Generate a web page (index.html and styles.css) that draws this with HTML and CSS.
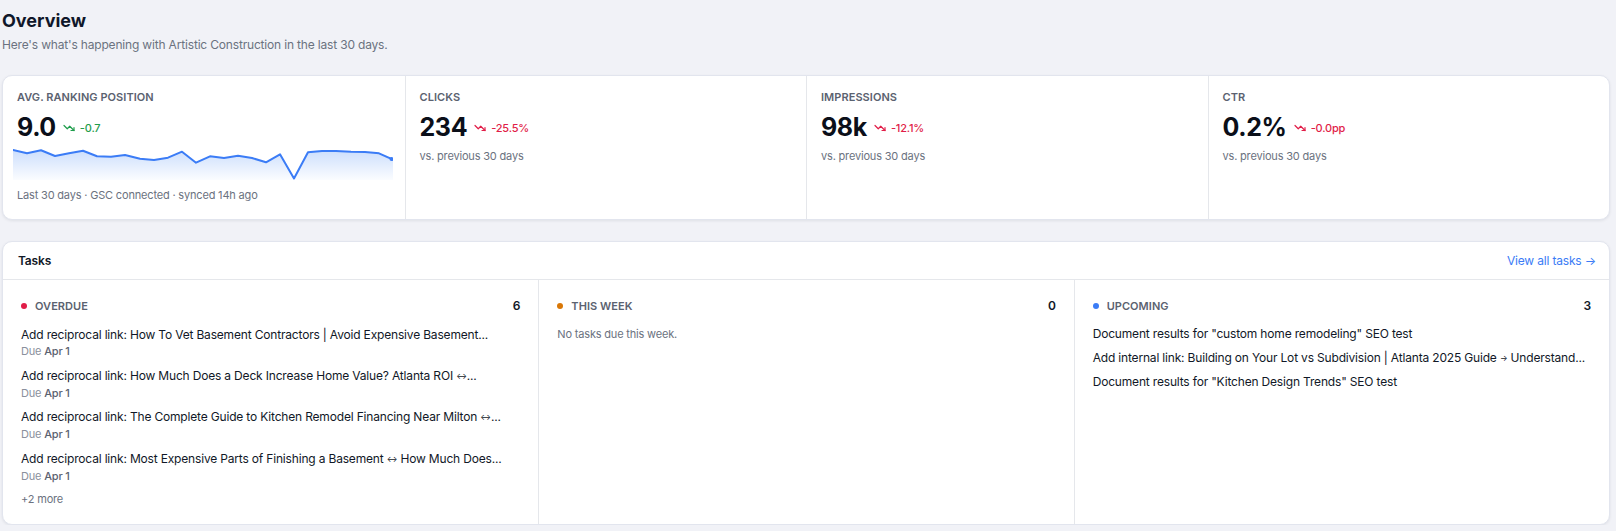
FILE: index.html
```html
<!DOCTYPE html>
<html lang="en">
<head>
<meta charset="utf-8">
<title>Overview</title>
<link rel="stylesheet" href="styles.css">
</head>
<body>
<main class="page">
  <header class="page-head">
    <h1 class="page-title">Overview</h1>
    <p class="page-sub">Here's what's happening with Artistic Construction in the last 30 days.</p>
  </header>

  <section class="card stats">
    <div class="stat">
      <div class="stat-label">Avg. Ranking Position</div>
      <div class="stat-row">
        <span class="stat-value">9.0</span>
        <span class="delta good">
          <svg class="trend" viewBox="0 0 24 24"><polyline points="22 17 13.5 8.5 8.5 13.5 2 7"/><polyline points="16 17 22 17 22 11"/></svg>
          -0.7
        </span>
      </div>
      <svg class="spark" viewBox="0 0 380 37" preserveAspectRatio="none">
        <defs>
          <linearGradient id="sg" x1="0" y1="0" x2="0" y2="1">
            <stop offset="0" stop-color="#3b82f6" stop-opacity="0.26"/>
            <stop offset="1" stop-color="#3b82f6" stop-opacity="0.02"/>
          </linearGradient>
        </defs>
        <path class="spark-area" d="M0,7 L14,10.3 L28,7.3 L42,13 L56,10.3 L70,7.7 L84,13.3 L98,13.7 L112,12 L127,15.7 L141,17 L155,14.7 L169,8.7 L183,19.7 L197,13.3 L211,15 L225,12.7 L239,15 L253,19.3 L267,11.3 L281,35.5 L295,9.3 L309,8 L323,8 L338,8.7 L352,9 L366,10.3 L380,16.5 L380,37 L0,37 Z"/>
        <polyline class="spark-line" points="0,7 14,10.3 28,7.3 42,13 56,10.3 70,7.7 84,13.3 98,13.7 112,12 127,15.7 141,17 155,14.7 169,8.7 183,19.7 197,13.3 211,15 225,12.7 239,15 253,19.3 267,11.3 281,35.5 295,9.3 309,8 323,8 338,8.7 352,9 366,10.3 380,16.5"/>
        <circle class="spark-dot" cx="378.5" cy="16" r="2"/>
      </svg>
      <div class="stat-foot">Last 30 days · GSC connected · synced 14h ago</div>
    </div>
    <div class="stat">
      <div class="stat-label">Clicks</div>
      <div class="stat-row">
        <span class="stat-value">234</span>
        <span class="delta bad">
          <svg class="trend" viewBox="0 0 24 24"><polyline points="22 17 13.5 8.5 8.5 13.5 2 7"/><polyline points="16 17 22 17 22 11"/></svg>
          -25.5%
        </span>
      </div>
      <div class="stat-note">vs. previous 30 days</div>
    </div>
    <div class="stat">
      <div class="stat-label">Impressions</div>
      <div class="stat-row">
        <span class="stat-value">98k</span>
        <span class="delta bad">
          <svg class="trend" viewBox="0 0 24 24"><polyline points="22 17 13.5 8.5 8.5 13.5 2 7"/><polyline points="16 17 22 17 22 11"/></svg>
          -12.1%
        </span>
      </div>
      <div class="stat-note">vs. previous 30 days</div>
    </div>
    <div class="stat">
      <div class="stat-label">CTR</div>
      <div class="stat-row">
        <span class="stat-value">0.2%</span>
        <span class="delta bad">
          <svg class="trend" viewBox="0 0 24 24"><polyline points="22 17 13.5 8.5 8.5 13.5 2 7"/><polyline points="16 17 22 17 22 11"/></svg>
          -0.0pp
        </span>
      </div>
      <div class="stat-note">vs. previous 30 days</div>
    </div>
  </section>

  <section class="card tasks">
    <div class="tasks-head">
      <h2 class="tasks-title">Tasks</h2>
      <a class="tasks-link" href="#">View all tasks <span class="link-arr">→</span></a>
    </div>
    <div class="tasks-cols">
      <div class="tcol">
        <div class="tcol-head">
          <span class="dot dot-red"></span>
          <span class="tcol-label">Overdue</span>
          <span class="tcol-count">6</span>
        </div>
        <ul class="tlist">
          <li class="titem">
            <div class="titem-title">Add reciprocal link: How To Vet Basement Contractors | Avoid Expensive Basement...</div>
            <div class="titem-due">Due <b>Apr 1</b></div>
          </li>
          <li class="titem">
            <div class="titem-title">Add reciprocal link: How Much Does a Deck Increase Home Value? Atlanta ROI <span class="arr">↔</span>...</div>
            <div class="titem-due">Due <b>Apr 1</b></div>
          </li>
          <li class="titem">
            <div class="titem-title">Add reciprocal link: The Complete Guide to Kitchen Remodel Financing Near Milton <span class="arr">↔</span>...</div>
            <div class="titem-due">Due <b>Apr 1</b></div>
          </li>
          <li class="titem">
            <div class="titem-title">Add reciprocal link: Most Expensive Parts of Finishing a Basement <span class="arr">↔</span> How Much Does...</div>
            <div class="titem-due">Due <b>Apr 1</b></div>
          </li>
          <li class="tmore">+2 more</li>
        </ul>
      </div>
      <div class="tcol">
        <div class="tcol-head">
          <span class="dot dot-orange"></span>
          <span class="tcol-label">This Week</span>
          <span class="tcol-count">0</span>
        </div>
        <ul class="tlist">
          <li class="tempty">No tasks due this week.</li>
        </ul>
      </div>
      <div class="tcol">
        <div class="tcol-head">
          <span class="dot dot-blue"></span>
          <span class="tcol-label">Upcoming</span>
          <span class="tcol-count">3</span>
        </div>
        <ul class="tlist tlist-tight">
          <li class="titem"><div class="titem-title">Document results for "custom home remodeling" SEO test</div></li>
          <li class="titem"><div class="titem-title">Add internal link: Building on Your Lot vs Subdivision | Atlanta 2025 Guide <span class="arr">→</span> Understand...</div></li>
          <li class="titem"><div class="titem-title">Document results for "Kitchen Design Trends" SEO test</div></li>
        </ul>
      </div>
    </div>
  </section>
</main>
</body>
</html>
```

FILE: styles.css
```css
* { box-sizing: border-box; }

html, body {
  margin: 0;
  padding: 0;
  background: #f1f2f7;
  font-family: Inter, "Noto Sans", "Liberation Sans", sans-serif;
  color: #111827;
  letter-spacing: -0.011em;
}

.page {
  width: 1610px;
  padding: 9px 0 0 2px;
}

.page-title {
  margin: 0;
  font-size: 18px;
  line-height: 24px;
  font-weight: 700;
  color: #0f172a;
  letter-spacing: 0;
}

.page-sub {
  margin: 4px 0 0;
  font-size: 12px;
  line-height: 16px;
  color: #6b7280;
}

.card {
  background: #fff;
  border: 1px solid #e2e5ee;
  border-radius: 10px;
  box-shadow: 0 1px 3px rgba(15, 23, 42, 0.08);
}

/* stats */
.stats {
  margin-top: 22px;
  display: grid;
  grid-template-columns: repeat(4, 1fr);
  overflow: hidden;
}

.stat {
  padding: 13px 14px 16px;
  border-left: 1px solid #e5e7eb;
  min-width: 0;
}
.stat:first-child { border-left: 0; }

.stat-label {
  font-size: 11px;
  line-height: 16px;
  font-weight: 600;
  text-transform: uppercase;
  letter-spacing: 0.005em;
  color: #5b6270;
}

.stat-row {
  margin-top: 6px;
  display: flex;
  align-items: center;
  height: 32px;
}

.stat-value {
  font-size: 25px;
  line-height: 32px;
  font-weight: 700;
  color: #0b0f19;
  letter-spacing: -0.015em;
  margin-right: 7px;
}

.delta {
  display: inline-flex;
  align-items: center;
  gap: 5px;
  font-size: 11px;
  line-height: 16px;
  font-weight: 500;
  margin-top: 2px;
}
.delta.good { color: #1f9d4c; }
.delta.bad { color: #e11d48; }

.trend {
  width: 12px;
  height: 12px;
  fill: none;
  stroke: currentColor;
  stroke-width: 2.4;
  stroke-linecap: round;
  stroke-linejoin: round;
}

.spark {
  display: block;
  width: calc(100% + 6.5px);
  height: 37px;
  margin: 0 -2.5px 0 -4px;
}
.spark-area { fill: url(#sg); stroke: none; }
.spark-line {
  fill: none;
  stroke: #3b7cf6;
  stroke-width: 2;
  stroke-linejoin: round;
  stroke-linecap: round;
  vector-effect: non-scaling-stroke;
}
.spark-dot { fill: #3b7cf6; }

.stat-foot {
  margin-top: 7px;
  font-size: 11px;
  line-height: 16px;
  color: #6b7280;
}

.stat-note {
  margin-top: 5px;
  font-size: 11px;
  line-height: 16px;
  color: #6b7280;
}

/* tasks */
.tasks {
  margin-top: 21px;
}

.tasks-head {
  height: 38px;
  padding: 0 13px 0 15px;
  display: flex;
  align-items: center;
  justify-content: space-between;
  border-bottom: 1px solid #e5e7eb;
}

.tasks-title {
  margin: 0;
  font-size: 12px;
  line-height: 16px;
  font-weight: 600;
  color: #111827;
}

.tasks-link {
  font-size: 12px;
  line-height: 16px;
  color: #3b7cf6;
  text-decoration: none;
}

.tasks-cols {
  display: grid;
  grid-template-columns: repeat(3, 1fr);
}

.tcol {
  padding: 18px 18px 17px 18px;
  border-left: 1px solid #e5e7eb;
  min-width: 0;
}
.tcol:first-child { border-left: 0; }

.tcol-head {
  display: flex;
  align-items: center;
  height: 16px;
}

.dot {
  width: 6px;
  height: 6px;
  border-radius: 50%;
  margin: 0 8px 0 0;
  flex: none;
}
.dot-red { background: #e11d48; }
.dot-orange { background: #d97706; }
.dot-blue { background: #3b7cf6; }

.tcol-label {
  font-size: 11px;
  line-height: 16px;
  font-weight: 600;
  text-transform: uppercase;
  letter-spacing: 0.005em;
  color: #5b6270;
}

.tcol-count {
  margin-left: auto;
  font-size: 12px;
  line-height: 16px;
  font-weight: 600;
  color: #111827;
}

.tlist {
  list-style: none;
  margin: 12px 0 0;
  padding: 0;
  display: flex;
  flex-direction: column;
  gap: 7px;
}
.tlist-tight {
  margin-top: 11px;
  gap: 6.5px;
}

.titem-title {
  font-size: 12px;
  line-height: 17px;
  color: #111827;
  white-space: nowrap;
}

.arr {
  font-size: 8px;
  vertical-align: 1px;
}

.titem-due {
  font-size: 11px;
  line-height: 16.5px;
  color: #8a909c;
}
.titem-due b {
  font-weight: 500;
  color: #5b6270;
}

.tmore, .tempty {
  font-size: 11px;
  line-height: 16px;
  color: #6b7280;
}
```
